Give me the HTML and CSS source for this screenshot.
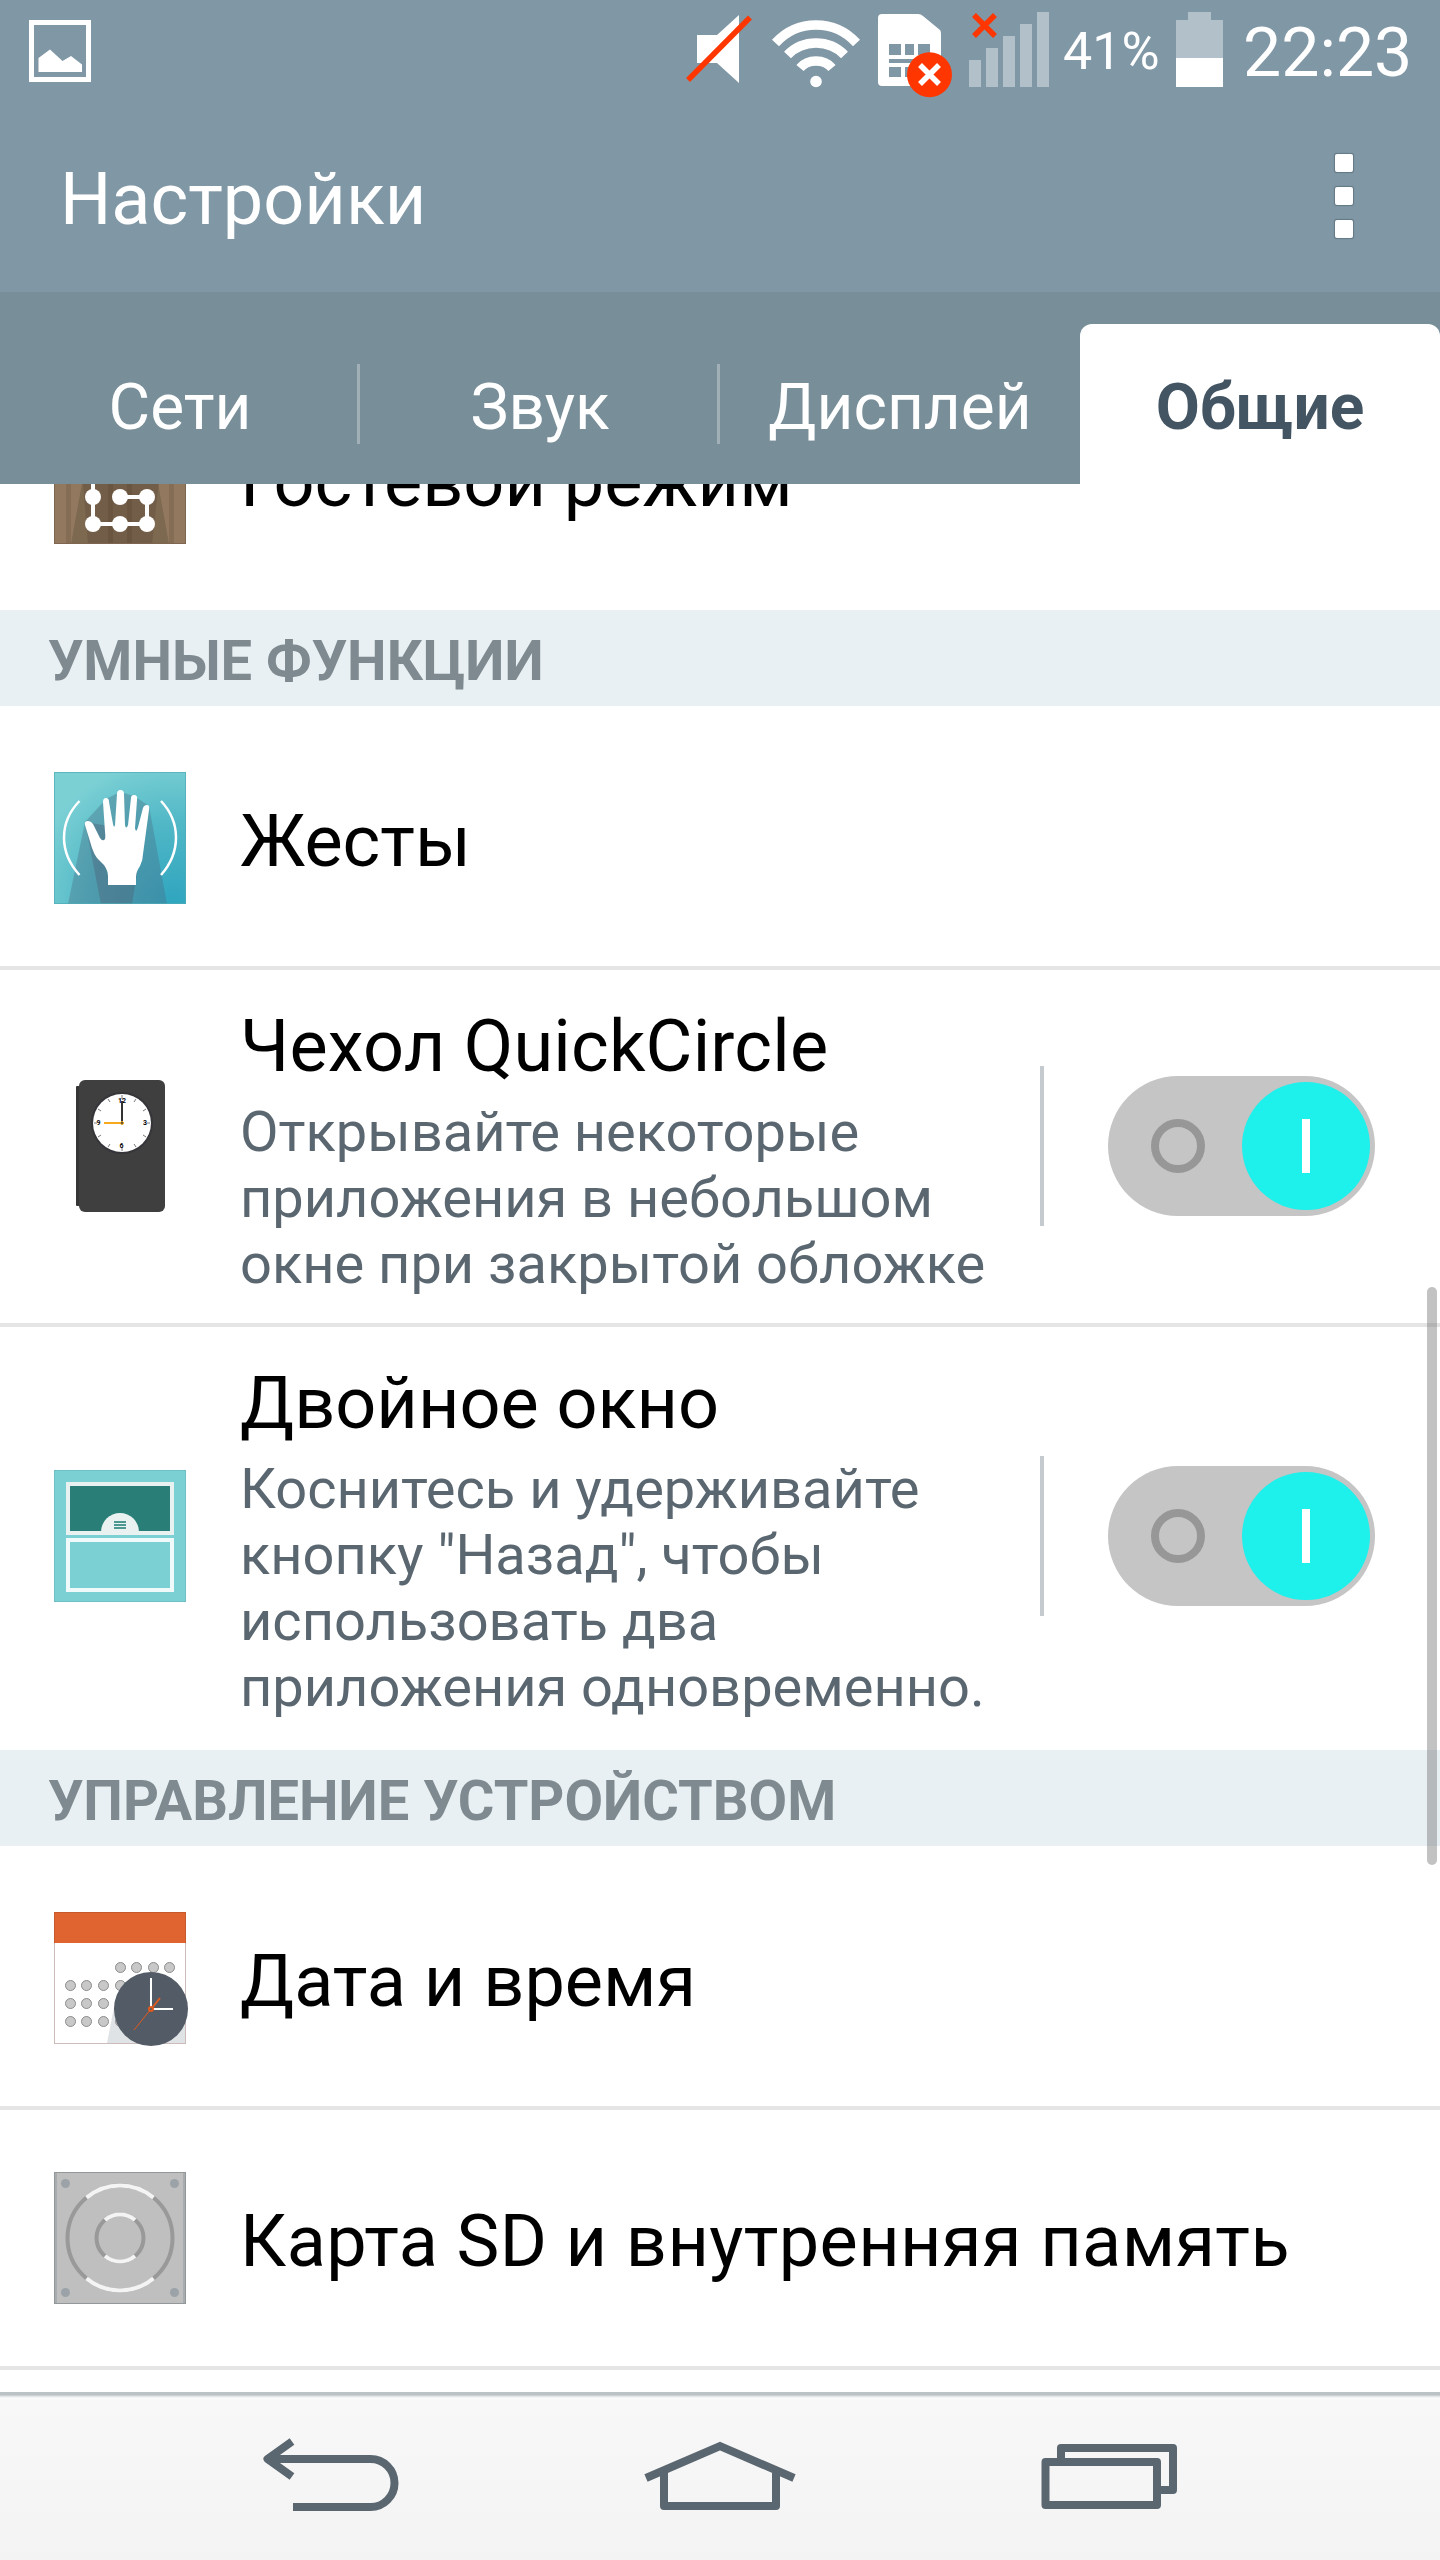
FILE: index.html
```html
<!DOCTYPE html>
<html lang="ru">
<head>
    <meta charset="UTF-8">
    <meta name="viewport" content="width=device-width, initial-scale=1.0">
    <title>Настройки</title>
    <link rel="stylesheet" href="styles.css">
</head>
<body>

    <div class="phone">
        <header class="header">
            <div class="status-bar">
                <svg class="status-picture" width="62" height="62" viewBox="0 0 62 62">
                    <rect x="2.5" y="2.5" width="57" height="57" fill="none" stroke="#fff" stroke-width="5"/>
                    <path d="M9.500 52V38L21 29.500 33.500 41 42 36 53 44.500V52Z" fill="#fff"/>
                </svg>
                <div class="status-right">
                    <!-- mute, wifi, sim, signal -->
                    <svg class="status-icons" width="368" height="100" viewBox="684 0 368 100">
                        <path d="M697 35H717L739 15V83L717 63H697Z" fill="#fff"/>
                        <path d="M688 80L750 17.500" stroke="#ff3600" stroke-width="5.500"/>
                        <g fill="none" stroke="#fff" stroke-width="9.500">
                            <path d="M775.500 43Q792 25 816 25T856.500 43"/>
                            <path d="M787.500 55Q799 43 816 43T844.500 55"/>
                            <path d="M800 68Q806 61 816 61T832 68"/>
                        </g>
                        <circle cx="816" cy="81.500" r="5.800" fill="#fff"/>
                        <path d="M882 14H918Q921 14 923 16L940 30Q941 31 941 34V82Q941 86 937 86H882Q878 86 878 82V18Q878 14 882 14Z" fill="#fff"/>
                        <path d="M889 44h12v11h-12zM905 44h9v11h-9zM918 44h12v11h-12zM889 59h41v4h-41zM889 67h12v10h-12zM905 67h9v10h-9z" fill="#8097a5"/>
                        <circle cx="929.500" cy="74.700" r="22.500" fill="#ff3600"/>
                        <path d="M920 65L939 84M939 65L920 84" stroke="#fff" stroke-width="5.500"/>
                        <path d="M969 60h12v27h-12zM986 48h12v39h-12zM1003 36h12v51h-12zM1020 24h12v63h-12zM1037 12h12v75h-12z" fill="#b2c1c9"/>
                        <path d="M974 15L995 36M995 15L974 36" stroke="#ff3600" stroke-width="5.500"/>
                    </svg>
                    <span class="battery-level">41%</span>
                    <svg class="battery" width="48" height="100" viewBox="1176 0 48 100">
                        <path d="M1188 12h23v8h12v38h-47V20h12z" fill="#b2c1c9"/>
                        <path d="M1176 58h47v29h-47z" fill="#fff"/>
                    </svg>
                    <span class="clock">22:23</span>
                </div>
            </div>
            <div class="title-bar">
                <h1>Настройки</h1>
                <div class="menu"><i></i><i></i><i></i></div>
            </div>
        </header>

        <nav class="tabs">
            <div class="tab">Сети</div>
            <div class="tab">Звук</div>
            <div class="tab">Дисплей</div>
            <div class="tab active">Общие</div>
        </nav>

        <main class="list">
            <div class="row row-cut">
                <svg class="icon" width="132" height="132" viewBox="0 0 132 132">
                    <rect width="132" height="132" fill="#937860"/>
                    <path d="M12 0h5v132h-5zM115 0h5v132h-5z" fill="#856c55"/>
                    <path d="M30 60H102L115 132H17Z" fill="#7d6850"/>
                    <path d="M28 60H106L98 132H34Z" fill="#725d48"/>
                    <path d="M54 60h5v72h-5zM73 60h5v72h-5z" fill="#6a5540"/>
                    <path d="M39 60V112H93V85H66" fill="none" stroke="#fff" stroke-width="4"/>
                    <g fill="#fff">
                        <circle cx="39" cy="85" r="8"/><circle cx="66" cy="85" r="8"/><circle cx="93" cy="85" r="8"/>
                        <circle cx="39" cy="112" r="8"/><circle cx="66" cy="112" r="8"/><circle cx="93" cy="112" r="8"/>
                    </g>
                    <rect x=".5" y=".5" width="131" height="131" fill="none" stroke="#7d6550"/>
                </svg>
                <div class="text"><div class="name">Гостевой режим</div></div>
            </div>

            <h2 class="section">УМНЫЕ ФУНКЦИИ</h2>

            <div class="row">
                <svg class="icon" width="132" height="132" viewBox="0 0 132 132">
                    <defs>
                        <radialGradient id="sea" cx=".9" cy="1" r="1.100">
                            <stop offset="0" stop-color="#2fa5bf"/>
                            <stop offset=".55" stop-color="#50b7c6"/>
                            <stop offset="1" stop-color="#7bd0d4"/>
                        </radialGradient>
                    </defs>
                    <rect width="132" height="132" fill="url(#sea)"/>
                    <path d="M31 50L52 27 66 20 80 24 95 34 113 132H14Z" fill="#4a6f86" fill-opacity=".38"/>
                    <path d="M31 50L47 132H78L90 60Z" fill="#4f6076" fill-opacity=".4"/>
                    <path d="M54 113V104Q54 99 50 93L43 86Q40 82 38 76L31 53Q30 49 34 49 37 49 39 52L46 66Q48 69 50 68 52 67 51 60L49 30Q49 26 52 26 55 26 55 30L59 52Q60 57 61 53L63 22Q63 18 66.500 18 70 18 70 22L71 53Q72 58 74 53L77 26Q77 23 80 23 84 23 83 28L81 56Q82 62 84 55L89 36Q90 33 93 33 96 33 95 38L89 82Q89 88 86 94 82 100 82 105V113Z" fill="#fff"/>
                    <path d="M25.500 29Q10 45 10 65.500T25.500 103M107 29Q122 45 122 65.500T107 103" fill="none" stroke="#fff" stroke-width="2.500"/>
                    <rect x=".5" y=".5" width="131" height="131" fill="none" stroke="#50abb5" stroke-opacity=".7"/>
                </svg>
                <div class="text"><div class="name">Жесты</div></div>
            </div>

            <div class="row row-tall">
                <svg class="icon" width="132" height="132" viewBox="0 0 132 132">
                    <rect x="22" y="6" width="12" height="120" rx="1" fill="#353535"/>
                    <rect x="25" width="86" height="132" rx="6" fill="#3f3f3f"/>
                    <circle cx="68" cy="43" r="31" fill="#35353a"/>
                    <circle cx="68" cy="43" r="29" fill="#fff"/>
                    <path d="M68 15v4M68 67v4M40 43h3M93 43h3M54 19l2 3M82 19l-2 3M44 29l3 2M92 29l-3 2M44 57l3-2M92 57l-3-2M54 67l2-3M82 67l-2-3" stroke="#777"/>
                    <g class="dial">
                        <text x="68" y="23">12</text><text x="91" y="45">3</text>
                        <text x="67.500" y="68">6</text><text x="44.500" y="45">9</text>
                    </g>
                    <path d="M68 43V21" stroke="#333" stroke-width="2"/>
                    <path d="M68 43H50" stroke="#f5ab1c" stroke-width="2"/>
                    <circle cx="68" cy="43" r="1.500" fill="#333" stroke="#f5ab1c"/>
                </svg>
                <div class="text">
                    <div class="name name-latin">Чехол QuickCircle</div>
                    <div class="desc">Открывайте некоторые<br>приложения в небольшом<br>окне при закрытой обложке</div>
                </div>
                <div class="toggle-box"><div class="toggle"><span class="off"></span><span class="knob"></span></div></div>
            </div>

            <div class="row row-tall">
                <svg class="icon" width="132" height="132" viewBox="0 0 132 132">
                    <rect x=".5" y=".5" width="131" height="131" fill="#7bd0d4" stroke="#70c0c6"/>
                    <rect x="14" y="14" width="104" height="49" fill="#297f77" stroke="#e9f2f1" stroke-width="4"/>
                    <path d="M47 62a19 19 0 0 1 38 0z" fill="#e9f2f1"/>
                    <path d="M60 52h12M60 55h12M60 58h12" stroke="#4d9992" stroke-width="2"/>
                    <rect x="14" y="70" width="104" height="50" fill="none" stroke="#f0fafb" stroke-width="4"/>
                </svg>
                <div class="text">
                    <div class="name">Двойное окно</div>
                    <div class="desc">Коснитесь и удерживайте<br>кнопку "Назад", чтобы<br>использовать два<br>приложения одновременно.</div>
                </div>
                <div class="toggle-box"><div class="toggle"><span class="off"></span><span class="knob"></span></div></div>
            </div>

            <h2 class="section">УПРАВЛЕНИЕ УСТРОЙСТВОМ</h2>

            <div class="row">
                <svg class="icon" width="132" height="132" viewBox="0 0 132 132">
                    <rect x=".5" y=".5" width="131" height="131" fill="#fff" stroke="#cbbcb9"/>
                    <path d="M0 0h132v31H0z" fill="#df6430"/>
                    <path d="M.5 31V.5h131V31" fill="none" stroke="#c65a2c"/>
                    <path d="M61 90L53 131H131V110Z" fill="#dfe3e6"/>
                    <g fill="#c8c8c8" stroke="#8c8c8c">
                        <circle cx="66.500" cy="55.500" r="5"/><circle cx="82.500" cy="55.500" r="5"/><circle cx="99.500" cy="55.500" r="5"/><circle cx="115.500" cy="55.500" r="5"/>
                        <circle cx="16.500" cy="73.500" r="5"/><circle cx="32.500" cy="73.500" r="5"/><circle cx="49.500" cy="73.500" r="5"/><circle cx="66.500" cy="73.500" r="5"/>
                        <circle cx="16.500" cy="91.500" r="5"/><circle cx="32.500" cy="91.500" r="5"/><circle cx="49.500" cy="91.500" r="5"/>
                        <circle cx="16.500" cy="109.500" r="5"/><circle cx="32.500" cy="109.500" r="5"/><circle cx="49.500" cy="109.500" r="5"/><circle cx="66.500" cy="109.500" r="5"/>
                    </g>
                    <circle cx="97" cy="97" r="37" fill="#535b66"/>
                    <path d="M97 97V66M97 97H119" stroke="#fff" stroke-width="2"/>
                    <path d="M97 97L80 118" stroke="#df5a1c"/>
                    <path d="M98 96L106 86" stroke="#df5a1c" stroke-width="2"/>
                    <circle cx="97" cy="97" r="2" fill="#535b66" stroke="#df5a1c" stroke-width="2"/>
                </svg>
                <div class="text"><div class="name">Дата и время</div></div>
            </div>

            <div class="row">
                <svg class="icon" width="132" height="132" viewBox="0 0 132 132">
                    <rect x=".5" y=".5" width="131" height="131" fill="#bfbfbf" stroke="#92979a"/>
                    <path d="M2 1v130M130 1v130" stroke="#a9acae" stroke-width="2"/>
                    <g fill="#9ba3a8">
                        <circle cx="11.500" cy="11.500" r="4.500"/><circle cx="120.500" cy="11.500" r="4.500"/>
                        <circle cx="11.500" cy="120.500" r="4.500"/><circle cx="120.500" cy="120.500" r="4.500"/>
                    </g>
                    <g fill="none" stroke="#999" stroke-width="4">
                        <circle cx="66" cy="66" r="52.500"/>
                        <circle cx="66" cy="66" r="23.500"/>
                    </g>
                    <g fill="none" stroke="#f4f4f4" stroke-width="4">
                        <path d="M32.500 25.600A52.500 52.500 0 0 1 99.500 25.600M32.500 106.400A52.500 52.500 0 0 0 99.500 106.400"/>
                        <path d="M51 48A23.500 23.500 0 0 1 81 48M51 84A23.500 23.500 0 0 0 81 84"/>
                    </g>
                </svg>
                <div class="text"><div class="name name-wide">Карта SD и внутренняя память</div></div>
            </div>

            <div class="scrollbar"></div>
        </main>

        <footer class="nav-bar">
            <svg width="1440" height="168" viewBox="0 2392 1440 168" fill="none" stroke="#5b6770" stroke-width="8" stroke-linejoin="round">
                <path d="M292 2441.500L267.500 2459 292 2476.500M268 2459H370.500A24 24 0 0 1 370.500 2507H293"/>
                <path d="M646 2478L720 2446 794 2478" stroke-linejoin="miter"/>
                <path d="M664 2473V2506H776V2473"/>
                <path d="M1061 2459V2448H1173V2490H1160"/>
                <path d="M1045.500 2462H1157V2505H1045.500Z"/>
            </svg>
        </footer>
    </div>

</body>
</html>
```

FILE: styles.css
```css
body {
    font-family: Roboto, "Noto Sans", sans-serif;
    background-color: #fff;
    margin: 0;
}

.phone {
    display: flex;
    flex-direction: column;
    width: 1440px;
    height: 2560px;
    overflow: hidden;
}

.header {
    background-color: #8097a5;
    color: #fff;
    height: 292px;
}

.status-bar {
    display: flex;
    justify-content: space-between;
    height: 100px;
    padding: 0 30px 0 29px;
}

.status-picture {
    margin-top: 20px;
}

.status-right {
    display: flex;
}

.battery-level {
    width: 112px;
    margin-left: 11px;
    font-size: 52px;
    line-height: 104px;
    white-space: nowrap;
}

.battery {
    margin-left: 1px;
}

.clock {
    width: 167px;
    margin-left: 19px;
    font-size: 68px;
    line-height: 106px;
    white-space: nowrap;
}

.title-bar {
    display: flex;
    justify-content: space-between;
    align-items: center;
    height: 192px;
    padding: 0 87px 0 60px;
}

.title-bar h1 {
    margin: 0;
    padding-top: 7px;
    font-size: 72px;
    font-weight: 400;
    line-height: 84px;
}

.menu {
    display: flex;
    flex-direction: column;
    gap: 15px;
}

.menu i {
    width: 18px;
    height: 18px;
    background-color: #fff;
    border-radius: 2px;
    box-shadow: 0 0 1px 1px rgba(70, 90, 102, 0.5);
}

.tabs {
    display: flex;
    flex-shrink: 0;
    height: 160px;
    padding-top: 32px;
    background-color: #788e99;
}

.tab {
    display: flex;
    justify-content: center;
    width: 360px;
    color: #fff;
    font-size: 64px;
    line-height: 167px;
    background: linear-gradient(#a1b0b7, #a1b0b7) right 40px / 3px 80px no-repeat;
}

.tab:nth-child(3) {
    background: none;
}

.tab.active {
    background: #fff;
    color: #435563;
    font-weight: 700;
    border-radius: 12px 12px 0 0;
}

.list {
    position: relative;
    flex: 1;
    overflow: hidden;
}

.row {
    display: flex;
    align-items: center;
    height: 256px;
    padding-left: 54px;
    border-bottom: 4px solid #e5e5e5;
}

/* first row is scrolled under the tabs */
.row-cut {
    margin-top: -134px;
}

.section + .row {
    margin-top: 4px;
}

.row:has(+ .section) {
    border-color: #fff;
}

.icon {
    flex-shrink: 0;
    overflow: visible;
}

.text {
    flex: 1;
    padding: 7px 0 0 54px;
}

.name {
    color: #000;
    font-size: 72px;
    line-height: 84px;
    white-space: nowrap;
}

.name-latin {
    letter-spacing: 0.2px;
}

.name-wide {
    letter-spacing: 0.4px;
}

.row-tall {
    height: auto;
    padding-bottom: 1px;
}

.row-tall .text {
    padding-top: 35px;
    padding-bottom: 25px;
}

.desc {
    margin-top: 10px;
    color: #5b6770;
    font-size: 56px;
    line-height: 66px;
    white-space: nowrap;
}

.section {
    margin: 0;
    height: 96px;
    padding-left: 48px;
    background-color: #e8f0f3;
    color: #7f8a90;
    font-size: 56px;
    font-weight: 700;
    line-height: 102px;
}

.dial text {
    font-size: 7px;
    font-weight: 700;
    text-anchor: middle;
}

.toggle-box {
    display: flex;
    align-items: center;
    height: 160px;
    padding: 0 65px 0 64px;
    border-left: 4px solid #c4cacd;
}

.toggle {
    display: flex;
    align-items: center;
    justify-content: space-between;
    box-sizing: border-box;
    width: 267px;
    height: 140px;
    padding: 0 5px 0 43px;
    border-radius: 70px;
    background-color: #c5c5c5;
}

.off {
    box-sizing: border-box;
    width: 54px;
    height: 54px;
    border: 8px solid #979797;
    border-radius: 50%;
}

.knob {
    width: 128px;
    height: 128px;
    border-radius: 50%;
    background: linear-gradient(#fff, #fff) center / 8px 54px no-repeat #1ef0ec;
}

.scrollbar {
    position: absolute;
    top: 803px;
    right: 3px;
    width: 10px;
    height: 578px;
    border-radius: 5px;
    background-color: rgba(110, 110, 110, 0.42);
}

.nav-bar {
    box-sizing: border-box;
    height: 168px;
    background: linear-gradient(#bcc3c7 0, #bcc3c7 3px, #dcdfe1 4px, #fbfbfb 6px, #f8f8f8 8px, #f3f3f3 100%);
}
```
